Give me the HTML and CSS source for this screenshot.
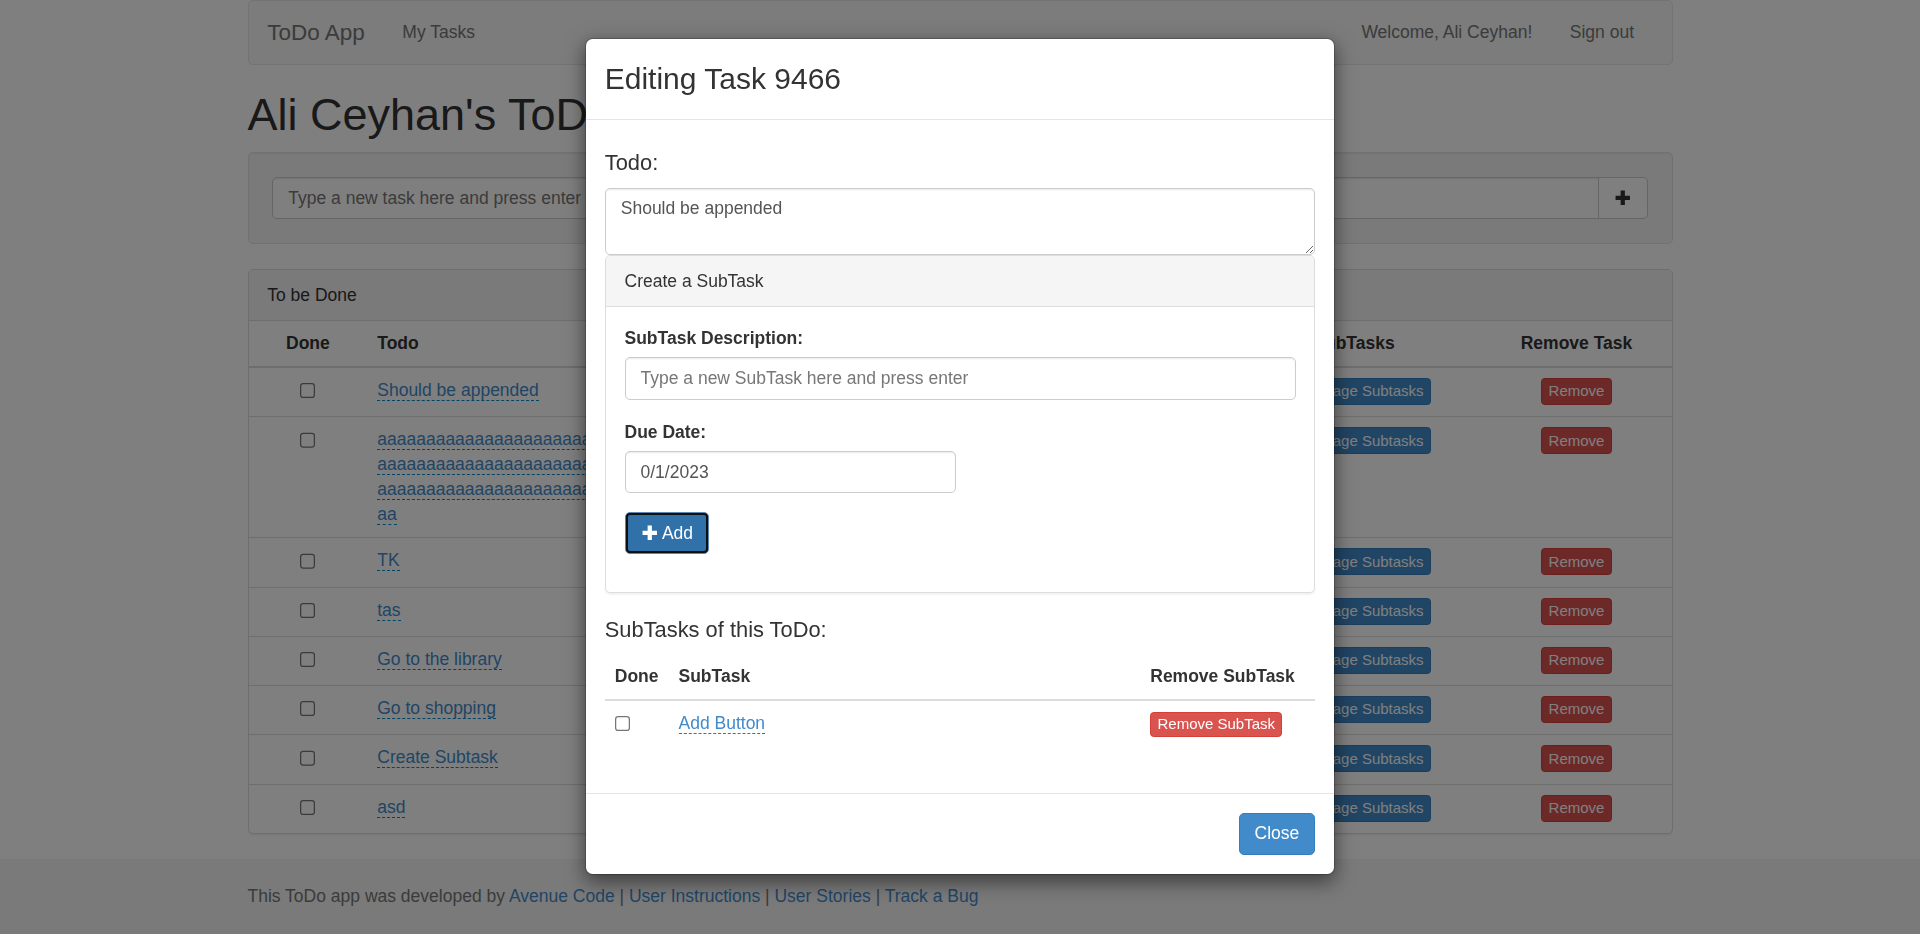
FILE: index.html
```html
<!DOCTYPE html>
<html lang="en">
<head>
<meta charset="utf-8">
<title>ToDo App</title>
<link rel="stylesheet" href="styles.css">
</head>
<body>
<div class="page">
  <div class="container">
    <nav class="navbar">
      <a class="brand">ToDo App</a>
      <ul class="nav">
        <li><a>My Tasks</a></li>
      </ul>
      <ul class="nav nav-right">
        <li><a>Welcome, Ali Ceyhan!</a></li>
        <li><a>Sign out</a></li>
      </ul>
    </nav>

    <h1 class="page-title">Ali Ceyhan's ToDo List</h1>

    <div class="well">
      <div class="input-group">
        <input class="form-control" type="text" placeholder="Type a new task here and press enter">
        <button class="btn btn-default btn-addon" type="button"><svg class="glyph" viewBox="0 0 14 14"><path d="M5.3 1.25h3.4v4.05h4.05v3.4H8.7v4.05H5.3V8.7H1.25V5.3H5.3z"/></svg></button>
      </div>
    </div>

    <div class="panel">
      <div class="panel-heading">To be Done</div>
      <table class="table tasks">
        <colgroup>
          <col class="col-done">
          <col>
          <col class="col-sub">
          <col class="col-remove">
        </colgroup>
        <thead>
          <tr><th class="c">Done</th><th>Todo</th><th class="c">SubTasks</th><th class="c">Remove Task</th></tr>
        </thead>
        <tbody>
          <tr><td class="c"><input type="checkbox" class="chk"></td><td class="todo-cell"><a class="editable">Should be appended</a></td><td class="c"><button class="btn btn-primary btn-xs"><svg class="list-icon" viewBox="0 0 12 12"><path d="M0 1h3v2H0zM4 1h8v2H4zM0 5h3v2H0zM4 5h8v2H4zM0 9h3v2H0zM4 9h8v2H4z"/></svg> Manage Subtasks</button></td><td class="c"><button class="btn btn-danger btn-xs">Remove</button></td></tr>
          <tr><td class="c"><input type="checkbox" class="chk"></td><td class="todo-cell"><a class="editable">aaaaaaaaaa<!---->aaaaaaaaaa<!---->aaaaaaaaaa<!---->aaaaaaaaaa<!---->aaaaaaaaaa<!---->aaaaaaaaaa<!---->aaaaaaaaaa<!---->aaaaaaaaaa<!---->aaaaaaaaaa<!---->aaaaaaaaaa<!---->aaaaaaaaaa<!---->aaaaaaaaaa<!---->aaaaaaaaaa<!---->aaaaaaaaaa<!---->aaaaaaaaaa<!---->aaaaaaaaaa<!---->aaaaaaaaaa<!---->aaaaaaaaaa<!---->aaaaaaaaaa<!---->aaaaaaaaaa<!---->aaaaaaaaaa<!---->aaaaaaaaaa<!---->aaaaaaaaaa<!---->aaaaaaaaaa<!---->aaaaaaaaaa<!---->aaaaaaaaaa</a></td><td class="c"><button class="btn btn-primary btn-xs"><svg class="list-icon" viewBox="0 0 12 12"><path d="M0 1h3v2H0zM4 1h8v2H4zM0 5h3v2H0zM4 5h8v2H4zM0 9h3v2H0zM4 9h8v2H4z"/></svg> Manage Subtasks</button></td><td class="c"><button class="btn btn-danger btn-xs">Remove</button></td></tr>
          <tr><td class="c"><input type="checkbox" class="chk"></td><td class="todo-cell"><a class="editable">TK</a></td><td class="c"><button class="btn btn-primary btn-xs"><svg class="list-icon" viewBox="0 0 12 12"><path d="M0 1h3v2H0zM4 1h8v2H4zM0 5h3v2H0zM4 5h8v2H4zM0 9h3v2H0zM4 9h8v2H4z"/></svg> Manage Subtasks</button></td><td class="c"><button class="btn btn-danger btn-xs">Remove</button></td></tr>
          <tr><td class="c"><input type="checkbox" class="chk"></td><td class="todo-cell"><a class="editable">tas</a></td><td class="c"><button class="btn btn-primary btn-xs"><svg class="list-icon" viewBox="0 0 12 12"><path d="M0 1h3v2H0zM4 1h8v2H4zM0 5h3v2H0zM4 5h8v2H4zM0 9h3v2H0zM4 9h8v2H4z"/></svg> Manage Subtasks</button></td><td class="c"><button class="btn btn-danger btn-xs">Remove</button></td></tr>
          <tr><td class="c"><input type="checkbox" class="chk"></td><td class="todo-cell"><a class="editable">Go to the library</a></td><td class="c"><button class="btn btn-primary btn-xs"><svg class="list-icon" viewBox="0 0 12 12"><path d="M0 1h3v2H0zM4 1h8v2H4zM0 5h3v2H0zM4 5h8v2H4zM0 9h3v2H0zM4 9h8v2H4z"/></svg> Manage Subtasks</button></td><td class="c"><button class="btn btn-danger btn-xs">Remove</button></td></tr>
          <tr><td class="c"><input type="checkbox" class="chk"></td><td class="todo-cell"><a class="editable">Go to shopping</a></td><td class="c"><button class="btn btn-primary btn-xs"><svg class="list-icon" viewBox="0 0 12 12"><path d="M0 1h3v2H0zM4 1h8v2H4zM0 5h3v2H0zM4 5h8v2H4zM0 9h3v2H0zM4 9h8v2H4z"/></svg> Manage Subtasks</button></td><td class="c"><button class="btn btn-danger btn-xs">Remove</button></td></tr>
          <tr><td class="c"><input type="checkbox" class="chk"></td><td class="todo-cell"><a class="editable">Create Subtask</a></td><td class="c"><button class="btn btn-primary btn-xs"><svg class="list-icon" viewBox="0 0 12 12"><path d="M0 1h3v2H0zM4 1h8v2H4zM0 5h3v2H0zM4 5h8v2H4zM0 9h3v2H0zM4 9h8v2H4z"/></svg> Manage Subtasks</button></td><td class="c"><button class="btn btn-danger btn-xs">Remove</button></td></tr>
          <tr><td class="c"><input type="checkbox" class="chk"></td><td class="todo-cell"><a class="editable">asd</a></td><td class="c"><button class="btn btn-primary btn-xs"><svg class="list-icon" viewBox="0 0 12 12"><path d="M0 1h3v2H0zM4 1h8v2H4zM0 5h3v2H0zM4 5h8v2H4zM0 9h3v2H0zM4 9h8v2H4z"/></svg> Manage Subtasks</button></td><td class="c"><button class="btn btn-danger btn-xs">Remove</button></td></tr>
        </tbody>
      </table>
    </div>
  </div>

  <footer class="footer">
    <div class="container">
      <p class="footer-text">This ToDo app was developed by <a>Avenue Code</a> | <a>User Instructions</a> | <a>User Stories</a> | <a>Track a Bug</a></p>
    </div>
  </footer>
</div>

<div class="backdrop"></div>

<div class="modal">
  <div class="modal-dialog">
    <div class="modal-content">
      <div class="modal-header">
        <h3 class="modal-title">Editing Task 9466</h3>
      </div>
      <div class="modal-body">
        <h4 class="section-title">Todo:</h4>
        <textarea class="form-control todo-text" rows="2">Should be appended</textarea>
        <div class="panel sub-panel">
          <div class="panel-heading">Create a SubTask</div>
          <div class="panel-body">
            <div class="form-group form-group-desc">
              <label class="field-label">SubTask Description:</label>
              <input class="form-control" type="text" placeholder="Type a new SubTask here and press enter">
            </div>
            <div class="form-group">
              <label class="field-label">Due Date:</label>
              <input class="form-control date-input" type="text" value="0/1/2023">
            </div>
            <div class="form-group">
              <button class="btn btn-primary btn-focus" type="button"><svg class="glyph" viewBox="0 0 14 14"><path d="M5.3 1.25h3.4v4.05h4.05v3.4H8.7v4.05H5.3V8.7H1.25V5.3H5.3z"/></svg> Add</button>
            </div>
          </div>
        </div>
        <h4 class="section-title">SubTasks of this ToDo:</h4>
        <table class="table subtasks">
          <thead>
            <tr><th class="st-done">Done</th><th>SubTask</th><th class="st-remove">Remove SubTask</th></tr>
          </thead>
          <tbody>
            <tr><td><input type="checkbox" class="chk"></td><td><a class="editable">Add Button</a></td><td><button class="btn btn-danger btn-xs btn-sub">Remove SubTask</button></td></tr>
          </tbody>
        </table>
      </div>
      <div class="modal-footer">
        <button class="btn btn-primary" type="button">Close</button>
      </div>
    </div>
  </div>
</div>
</body>
</html>
```
FILE: styles.css
```css
html {
  zoom: 1.25;
}

* {
  box-sizing: border-box;
}

body {
  margin: 0;
  font-family: "Liberation Sans", Arial, Helvetica, sans-serif;
  font-size: 14px;
  line-height: 1.42857143;
  color: #333;
  background: #fff;
}

a {
  color: #428bca;
  text-decoration: none;
}

.container {
  width: 1170px;
  margin: 0 auto;
  padding: 0 15px;
}

/* navbar */
.navbar {
  display: flex;
  height: 52px;
  margin-bottom: 20px;
  padding-right: 15px;
  background: #f8f8f8;
  border: 1px solid #e7e7e7;
  border-radius: 4px;
}

.brand {
  display: block;
  padding: 15px;
  font-size: 18px;
  line-height: 20px;
  color: #777;
}

.nav {
  display: flex;
  margin: 0;
  padding: 0;
  list-style: none;
}

.nav a {
  display: block;
  padding: 15px;
  line-height: 20px;
  color: #777;
}

.nav-right {
  margin-left: auto;
}

.page-title {
  margin: 20px 0 10px;
  font-size: 36px;
  font-weight: 500;
  line-height: 1.1;
}

/* well */
.well {
  margin-bottom: 20px;
  padding: 19px;
  background: #f5f5f5;
  border: 1px solid #e3e3e3;
  border-radius: 4px;
  box-shadow: inset 0 1px 1px rgba(0, 0, 0, .05);
}

.input-group {
  display: flex;
}

.form-control {
  display: block;
  width: 100%;
  height: 34px;
  padding: 6px 12px;
  font-family: inherit;
  font-size: 14px;
  line-height: 1.42857143;
  color: #555;
  background: #fff;
  border: 1px solid #ccc;
  border-radius: 4px;
  box-shadow: inset 0 1px 1px rgba(0, 0, 0, .075);
}

.form-control::placeholder {
  color: #777;
}

.input-group .form-control {
  flex: 1;
  border-radius: 4px 0 0 4px;
}

/* buttons */
.btn {
  display: inline-block;
  margin: 0;
  padding: 6px 12px;
  font-family: inherit;
  font-size: 14px;
  font-weight: normal;
  line-height: 1.42857143;
  text-align: center;
  white-space: nowrap;
  vertical-align: middle;
  border: 1px solid transparent;
  border-radius: 4px;
  cursor: pointer;
}

.btn-default {
  color: #333;
  background: #fff;
  border-color: #ccc;
}

.btn-addon {
  margin-left: -1px;
  border-radius: 0 4px 4px 0;
}

.btn-primary {
  color: #fff;
  background: #428bca;
  border-color: #357ebd;
}

.btn-danger {
  color: #fff;
  background: #d9534f;
  border-color: #d43f3a;
}

.btn-xs {
  padding: 1px 5px;
  font-size: 12px;
  line-height: 1.5;
  border-radius: 3px;
}

.btn-sub {
  line-height: 16.5px;
}

.btn-focus {
  background: #3071a9;
  border-color: #5b85b1;
  outline: 2px solid #101010;
  outline-offset: -3px;
}

.glyph {
  display: inline-block;
  width: 14px;
  height: 14px;
  vertical-align: -2px;
  fill: currentColor;
}

.list-icon {
  display: inline-block;
  width: 12px;
  height: 12px;
  vertical-align: -1px;
  fill: currentColor;
}

/* panel */
.panel {
  margin-bottom: 20px;
  background: #fff;
  border: 1px solid #ddd;
  border-radius: 4px;
  box-shadow: 0 1px 1px rgba(0, 0, 0, .05);
}

.panel-heading {
  padding: 10px 15px;
  color: #333;
  background: #f5f5f5;
  border-bottom: 1px solid #ddd;
  border-radius: 3px 3px 0 0;
}

.panel-body {
  padding: 15px;
}

/* tables */
.table {
  width: 100%;
  border-collapse: collapse;
  border-spacing: 0;
}

.table th,
.table td {
  padding: 8px;
  line-height: 1.42857143;
  text-align: left;
  vertical-align: top;
  border-top: 1px solid #ddd;
}

.table thead th {
  vertical-align: bottom;
  font-weight: bold;
  border-top: 0;
  border-bottom: 2px solid #ddd;
}

.tasks {
  table-layout: fixed;
}

.col-done {
  width: 95px;
}

.col-sub {
  width: 204px;
}

.col-remove {
  width: 152px;
}

.table .c {
  text-align: center;
}

.todo-cell {
  word-break: break-all;
}

.chk {
  margin: 4px 0 0;
}

.editable {
  color: #428bca;
  border-bottom: 1px dashed #0088cc;
}

/* footer */
.footer {
  height: 62px;
  padding-top: 20px;
  background: #f5f5f5;
}

.footer-text {
  margin: 0;
  color: #777;
}

/* modal */
.backdrop {
  position: fixed;
  inset: 0;
  z-index: 1040;
  background: #000;
  opacity: .5;
}

.modal {
  position: fixed;
  inset: 0;
  z-index: 1050;
  overflow: hidden;
}

.modal-dialog {
  width: 600px;
  margin: 30px auto;
}

.modal-content {
  background: #fff;
  background-clip: padding-box;
  border: 1px solid rgba(0, 0, 0, .2);
  border-radius: 6px;
  box-shadow: 0 5px 15px rgba(0, 0, 0, .5);
}

.modal-header {
  padding: 15.5px 15px 14.5px;
  border-bottom: 1px solid #e5e5e5;
}

.modal-title {
  margin: 0;
  font-size: 24px;
  font-weight: 500;
  line-height: 1.42857143;
}

.modal-body {
  padding: 15px;
}

.section-title {
  margin: 10px 0;
  font-size: 17.5px;
  font-weight: 500;
  line-height: 1.1;
}

.todo-text {
  height: 54px;
  resize: vertical;
}

.sub-panel {
  margin-top: 0;
}

.form-group {
  margin-bottom: 15px;
}

.form-group-desc {
  margin-bottom: 16px;
}

.field-label {
  display: inline-block;
  margin-bottom: 5px;
  font-weight: bold;
}

.date-input {
  width: 265px;
}

.subtasks {
  margin-bottom: 20px;
}

.st-done {
  width: 51px;
}

.st-remove {
  width: 140px;
}

.modal-footer {
  padding: 15px;
  text-align: right;
  border-top: 1px solid #e5e5e5;
}
```
